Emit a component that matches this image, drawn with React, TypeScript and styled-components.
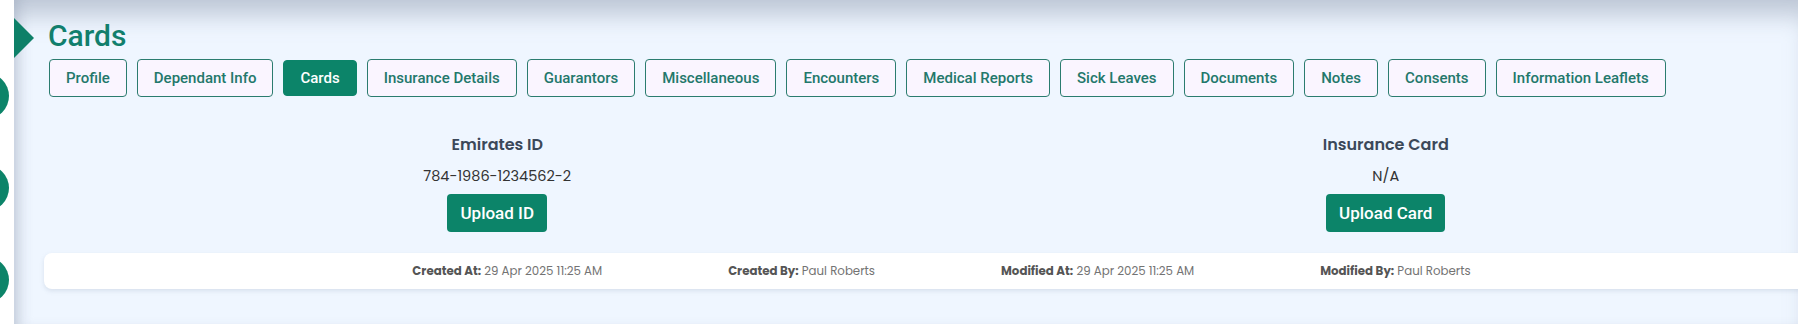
import React from "react";
import styled, { createGlobalStyle } from "styled-components";

const GlobalStyle = createGlobalStyle`
    html, body {
        margin: 0;
        padding: 0;
        background: #eff6ff;
        overflow: hidden;
    }
    * {
        box-sizing: border-box;
    }
`

const Page = styled.div`
    display: flex;
    width: 1798px;
    height: 324px;
    position: relative;
    overflow: hidden;
`
const Sidebar = styled.aside`
    width: 14px;
    flex-shrink: 0;
    background: #ffffff;
    overflow: hidden;
    display: flex;
    flex-direction: column;
    gap: 46px;
    padding-top: 73px;
`
const NavDot = styled.span`
    display: block;
    flex-shrink: 0;
    width: 46px;
    height: 46px;
    margin-left: -37px;
    border-radius: 50%;
    background: #0c8469;
`
const Toggle = styled.span`
    position: absolute;
    left: 14px;
    top: 18px;
    width: 0;
    height: 0;
    border-top: 20px solid transparent;
    border-bottom: 20px solid transparent;
    border-left: 20px solid #0e8068;
`
const Main = styled.main`
    flex: 1;
    min-width: 0;
    overflow: hidden;
    background: #eff6ff;
    box-shadow: inset 0 26px 22px -10px rgba(148, 160, 180, 0.5),
        inset 12px 0 14px -8px rgba(148, 160, 180, 0.45);
    padding: 18px 0 0 30px;
`
const Content = styled.div`
    width: 1795px;
`
const Header = styled.header`
    padding-left: 5px;
`
const Title = styled.h1`
    margin: 0 0 5px -1px;
    font-family: Roboto, "Liberation Sans", sans-serif;
    font-size: 30px;
    line-height: 36px;
    font-weight: 500;
    color: #127f6d;
`
const Tabs = styled.nav`
    display: flex;
    gap: 10px;
`
const Tab = styled.button<{ $active?: boolean }>`
    height: 38px;
    padding: 0 16px;
    border: 1px solid ${props => props.$active ? "#0c8469" : "#2b7c6f"};
    border-radius: 4px;
    background: ${props => props.$active ? "#0c8469" : "#faf5ff"};
    color: ${props => props.$active ? "#ffffff" : "#23786b"};
    font-family: Roboto, "Liberation Sans", sans-serif;
    font-size: 15px;
    font-weight: 500;
    white-space: nowrap;
    cursor: pointer;
    ${props => props.$active && `
        height: 36px;
        margin-top: 1px;
    `}
`
const CardsGrid = styled.section`
    display: grid;
    grid-template-columns: 1fr 1fr;
    padding: 37px 9px 0 9px;
`
const CardColumn = styled.div`
    display: flex;
    flex-direction: column;
    align-items: center;
`
const CardTitle = styled.h3`
    margin: 0 0 10px 0;
    font-family: Poppins, "Noto Sans", sans-serif;
    font-size: 16px;
    line-height: 22px;
    font-weight: 600;
    color: #3b4859;
`
const CardValue = styled.p`
    margin: 0 0 8px 0;
    font-family: Poppins, "Noto Sans", sans-serif;
    font-size: 14.5px;
    line-height: 20px;
    font-weight: 400;
    color: #333;
`
const UploadButton = styled.button`
    height: 38px;
    padding: 0 13px;
    border: none;
    border-radius: 4px;
    background: #0c8469;
    color: #fff;
    font-family: Roboto, "Liberation Sans", sans-serif;
    font-size: 17px;
    font-weight: 500;
    cursor: pointer;
`
const AuditBar = styled.footer`
    display: flex;
    justify-content: center;
    align-items: center;
    gap: 126px;
    height: 36px;
    margin-top: 21px;
    background: #ffffff;
    border-radius: 8px;
    box-shadow: 0 2px 4px rgba(148, 163, 184, 0.25);
`
const AuditItem = styled.div`
    font-family: Poppins, "Noto Sans", sans-serif;
    font-size: 11.8px;
    color: #737373;
    white-space: nowrap;
`
const AuditLabel = styled.b`
    font-weight: 700;
    color: #555;
`

const tabs = [
    "Profile", "Dependant Info", "Cards", "Insurance Details", "Guarantors",
    "Miscellaneous", "Encounters", "Medical Reports", "Sick Leaves",
    "Documents", "Notes", "Consents", "Information Leaflets",
];

const audit = [
    { label: "Created At:", value: "29 Apr 2025 11:25 AM" },
    { label: "Created By:", value: "Paul Roberts" },
    { label: "Modified At:", value: "29 Apr 2025 11:25 AM" },
    { label: "Modified By:", value: "Paul Roberts" },
];

function App() {
    return (
        <Page>
            <GlobalStyle />
            <Sidebar>
                <NavDot />
                <NavDot />
                <NavDot />
            </Sidebar>
            <Toggle />
            <Main>
                <Content>
                    <Header>
                        <Title>Cards</Title>
                        <Tabs>
                            {tabs.map(tab => (
                                <Tab key={tab} $active={tab === "Cards"}>{tab}</Tab>
                            ))}
                        </Tabs>
                    </Header>
                    <CardsGrid>
                        <CardColumn>
                            <CardTitle>Emirates ID</CardTitle>
                            <CardValue>784-1986-1234562-2</CardValue>
                            <UploadButton>Upload ID</UploadButton>
                        </CardColumn>
                        <CardColumn>
                            <CardTitle>Insurance Card</CardTitle>
                            <CardValue>N/A</CardValue>
                            <UploadButton>Upload Card</UploadButton>
                        </CardColumn>
                    </CardsGrid>
                    <AuditBar>
                        {audit.map(item => (
                            <AuditItem key={item.label}>
                                <AuditLabel>{item.label}</AuditLabel> {item.value}
                            </AuditItem>
                        ))}
                    </AuditBar>
                </Content>
            </Main>
        </Page>
    );
}

export default App;
